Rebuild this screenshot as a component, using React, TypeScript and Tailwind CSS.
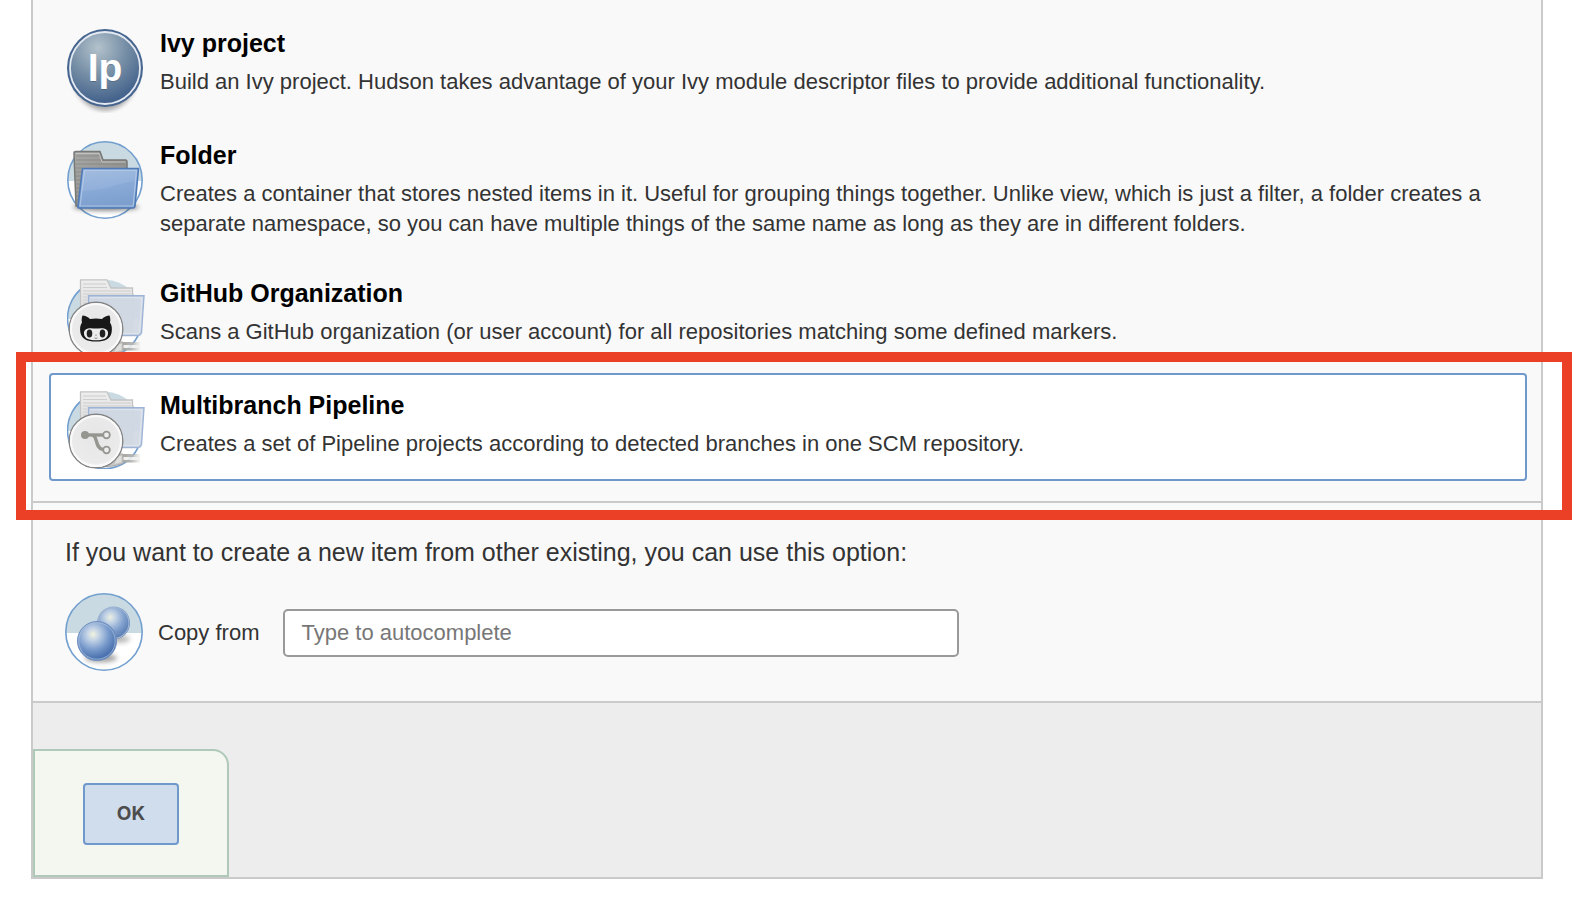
import { useState, type ReactNode } from "react";

function IvyIcon() {
  return (
    <svg viewBox="0 0 78 84" className="h-[84px] w-[78px]" aria-hidden="true">
      <defs>
        <radialGradient id="ivyFill" cx="0.4" cy="0.22" r="0.75">
          <stop offset="0" stopColor="#b3c2cc" />
          <stop offset="0.5" stopColor="#7a92a8" />
          <stop offset="1" stopColor="#45638c" />
        </radialGradient>
        <filter id="ivyShadow" x="-20%" y="-20%" width="140%" height="140%">
          <feGaussianBlur stdDeviation="2" />
        </filter>
      </defs>
      <ellipse cx="38" cy="44" rx="33" ry="38" fill="#000" opacity="0.3" filter="url(#ivyShadow)" />
      <ellipse cx="38" cy="39" rx="38" ry="39" fill="#46658f" />
      <ellipse cx="38" cy="39" rx="35" ry="36" fill="url(#ivyFill)" stroke="#e3e9f1" strokeWidth="1.8" />
      <g fontFamily="'Liberation Sans', Arial, sans-serif" fontWeight="700" fontSize="39" textAnchor="middle">
        <text x="38" y="53" fill="#2d4560" opacity="0.4">Ip</text>
        <text x="38" y="52" fill="#fff">Ip</text>
      </g>
    </svg>
  );
}

function Disc({ id, rx = 37.2, outline = true }: { id: string; rx?: number; outline?: boolean }) {
  return (
    <>
      <clipPath id={id}>
        <ellipse cx="38" cy="39" rx={rx} ry="38.2" />
      </clipPath>
      <g clipPath={`url(#${id})`}>
        <rect x="-1" width="80" height="78" fill="#fff" />
        <rect x="-1" width="80" height="40" fill="#c9dae2" />
      </g>
      {outline && <ellipse cx="38" cy="39" rx={rx} ry="38.2" fill="none" stroke="#729fcf" strokeWidth="1.6" />}
    </>
  );
}

function FolderIcon() {
  return (
    <svg viewBox="0 0 78 84" className="h-[84px] w-[78px]" aria-hidden="true">
      <defs>
        <linearGradient id="fBack" x1="0" y1="0" x2="1" y2="1">
          <stop offset="0" stopColor="#a8a8a6" />
          <stop offset="1" stopColor="#868684" />
        </linearGradient>
        <linearGradient id="fFront" x1="0" y1="0" x2="0.2" y2="1">
          <stop offset="0" stopColor="#9cb7dd" />
          <stop offset="0.5" stopColor="#8aabd8" />
          <stop offset="1" stopColor="#7d9fcd" />
        </linearGradient>
        <filter id="fBlur" x="-20%" y="-60%" width="140%" height="220%">
          <feGaussianBlur stdDeviation="2.2" />
        </filter>
      </defs>
      <Disc id="fDisc" />
      <ellipse cx="39" cy="66" rx="33" ry="4" fill="#222" opacity="0.5" filter="url(#fBlur)" />
      <path d="M9 65 L7 12 Q7 10.500 9 10.500 H33 L36 19 H59 Q60 19 60 21 V65 Z" fill="url(#fBack)" stroke="#777775" strokeWidth="1.500" />
      <path d="M9 15H33M9 19H34M9 23H58M9 27H15M9 31H15M9 35H14M9 39H14M9 43H14M9 47H13M9 51H13M9 55H12M9 59H12" stroke="#777775" strokeWidth="1" opacity="0.5" />
      <path d="M9 12.500H32L35 21H58.500" fill="none" stroke="#d0d0ce" strokeWidth="1" opacity="0.7" />
      <path d="M15.500 27.500H71.500L68 65Q67.500 67 66 67H12Q10.500 67 11 65Z" fill="url(#fFront)" stroke="#4f7ab8" strokeWidth="1.600" strokeLinejoin="round" />
      <path d="M17.500 29.500H69.500L66.200 65H13Z" fill="none" stroke="#bcd0ec" strokeWidth="1.200" opacity="0.7" />
      <path d="M17 30H69L68 40C52 42 42 49 15 50Z" fill="#fff" opacity="0.08" />
    </svg>
  );
}

function OrgBase({ id, children }: { id: string; children: ReactNode }) {
  return (
    <svg viewBox="0 0 78 84" className="h-[84px] w-[78px]" aria-hidden="true">
      <defs>
        <linearGradient id={`${id}Back`} x1="0" y1="0" x2="0" y2="1">
          <stop offset="0" stopColor="#eeeeee" />
          <stop offset="1" stopColor="#d2d4d6" />
        </linearGradient>
        <linearGradient id={`${id}Front`} x1="0" y1="0" x2="1" y2="1">
          <stop offset="0" stopColor="#cbd5e2" />
          <stop offset="1" stopColor="#d3dae4" />
        </linearGradient>
        <radialGradient id={`${id}Badge`} cx="0.5" cy="0.4" r="0.6">
          <stop offset="0" stopColor="#e6e6e6" />
          <stop offset="0.85" stopColor="#ebebeb" />
          <stop offset="1" stopColor="#ffffff" />
        </radialGradient>
        <linearGradient id={`${id}Pipe`} gradientUnits="userSpaceOnUse" x1="54" y1="0" x2="74" y2="0">
          <stop offset="0" stopColor="#a2a2a0" />
          <stop offset="0.5" stopColor="#b5b5b3" />
          <stop offset="1" stopColor="#b5b5b3" stopOpacity="0" />
        </linearGradient>
        <clipPath id={`${id}Clip`}>
          <rect width="78" height="78" />
        </clipPath>
      </defs>
      <g clipPath={`url(#${id}Clip)`}>
        <Disc id={`${id}Disc`} outline={false} />
        <path d="M16 8.500A37.200 38.200 0 1 0 73.500 50" fill="none" stroke="#729fcf" strokeWidth="1.600" />
        <path d="M13.500 55V.8H40L44 9H65.500V55Z" fill={`url(#${id}Back)`} stroke="#c3c3c3" strokeWidth="1.300" />
        <path d="M16 5H39M16 8.500H40M16 12H64M16 15H64M16 18H20M16 21H20M16 24H20" stroke="#cdcdcd" strokeWidth="1" />
        <path d="M21.500 16.700H77L74.500 53.500Q74 56 71.500 56.500H21.500Z" fill={`url(#${id}Front)`} fillOpacity="0.94" stroke="#9eb4d6" strokeWidth="1.400" />
        <path d="M23.500 18.700H75L72.500 53Q72 54.500 70 54.500H23.500" fill="none" stroke="#e0e6ee" strokeWidth="1" />
        <rect x="52" y="66" width="21" height="3" fill="#eeeeed" opacity="0.85" />
        <rect x="52" y="63" width="22" height="3" fill={`url(#${id}Pipe)`} />
        <rect x="52" y="69" width="22" height="2.500" fill={`url(#${id}Pipe)`} />
        <path d="M34 76L50 63H56V72.500L46 75Z" fill="#c6c6c5" stroke="#a8a8a6" strokeWidth="1" />
        <path d="M50 65H54.500V71L48 73Z" fill="#dededd" />
        <circle cx="29" cy="50" r="26.800" fill={`url(#${id}Badge)`} stroke="#858585" strokeWidth="1.400" />
        <circle cx="29" cy="50" r="25" fill="none" stroke="#fafafa" strokeWidth="2" />
        {children}
      </g>
    </svg>
  );
}

function GitHubOrgIcon() {
  return (
    <OrgBase id="gh">
      <path
        d="M15.500 36.500C18 36.500 21 38 23 40C27 39.200 31 39.200 35 40C37 38 40 36.500 42.500 36.500C43.500 39 43.500 41.500 43 43.500C45 46 45.300 50 44.500 54C43.200 60 38 62.500 29 62.500S14.800 60 13.500 54C12.700 50 13 46 15 43.500C14.500 41.500 14.500 39 15.500 36.500Z"
        fill="#181818"
      />
      <path
        d="M21 49.500C24 48.800 26 49.500 29 49.500S34 48.800 37 49.500C40 50.200 41.500 52 41 55C40.300 60 35.500 61.200 29 61.200S17.700 60 17 55C16.500 52 18 50.200 21 49.500Z"
        fill="#ececec"
      />
      <ellipse cx="22.500" cy="54.500" rx="2.800" ry="3.900" fill="#222" />
      <ellipse cx="35.500" cy="54.500" rx="2.800" ry="3.900" fill="#222" />
      <path d="M29 55.500V57M27.500 59Q29 59.700 30.500 59" fill="none" stroke="#888" strokeWidth="1" />
    </OrgBase>
  );
}

function MultibranchIcon() {
  return (
    <OrgBase id="mb">
      <g fill="none" stroke="#969691" strokeWidth="3.400">
        <path d="M18 44H36" />
        <path d="M26 44C31 47 28 57 36 58.500" />
        <circle cx="39.500" cy="44" r="3.300" fill="#eee" strokeWidth="1.800" />
        <circle cx="39.500" cy="59" r="3.300" fill="#eee" strokeWidth="1.800" />
      </g>
      <circle cx="18" cy="44" r="4" fill="#969691" />
    </OrgBase>
  );
}

function CopyIcon() {
  return (
    <svg viewBox="-1 0 80 84" className="h-[84px] w-[80px]" aria-hidden="true">
      <defs>
        <radialGradient id="ball" cx="0.4" cy="0.33" r="0.62">
          <stop offset="0" stopColor="#f3f3df" />
          <stop offset="0.25" stopColor="#c3d3e6" />
          <stop offset="0.65" stopColor="#7799cb" />
          <stop offset="1" stopColor="#4a71ae" />
        </radialGradient>
        <filter id="bBlur" x="-30%" y="-60%" width="160%" height="220%">
          <feGaussianBlur stdDeviation="2.500" />
        </filter>
      </defs>
      <Disc id="cDisc" rx={38.2} />
      <ellipse cx="52" cy="46" rx="12" ry="3.500" fill="#222" opacity="0.35" filter="url(#bBlur)" />
      <circle cx="47.500" cy="30" r="16.500" fill="url(#ball)" opacity="0.85" />
      <circle cx="47.500" cy="30" r="15.500" fill="none" stroke="#9fb4d2" strokeWidth="1.200" />
      <ellipse cx="35" cy="65" rx="16" ry="4" fill="#222" opacity="0.45" filter="url(#bBlur)" />
      <circle cx="31" cy="48" r="19.500" fill="url(#ball)" stroke="#6f90c0" strokeWidth="1" />
      <circle cx="31" cy="48" r="18.200" fill="none" stroke="#a9bfdf" strokeWidth="1" opacity="0.8" />
    </svg>
  );
}

const items: { id: string; title: string; text: string; icon: ReactNode; marked?: boolean }[] = [
  {
    id: "ivy",
    title: "Ivy project",
    text: "Build an Ivy project. Hudson takes advantage of your Ivy module descriptor files to provide additional functionality.",
    icon: <IvyIcon />,
  },
  {
    id: "folder",
    title: "Folder",
    text: "Creates a container that stores nested items in it. Useful for grouping things together. Unlike view, which is just a filter, a folder creates a separate namespace, so you can have multiple things of the same name as long as they are in different folders.",
    icon: <FolderIcon />,
  },
  {
    id: "github",
    title: "GitHub Organization",
    text: "Scans a GitHub organization (or user account) for all repositories matching some defined markers.",
    icon: <GitHubOrgIcon />,
  },
  {
    id: "multibranch",
    title: "Multibranch Pipeline",
    text: "Creates a set of Pipeline projects according to detected branches in one SCM repository.",
    icon: <MultibranchIcon />,
    marked: true,
  },
];

export default function App() {
  const [selected, setSelected] = useState("multibranch");
  return (
    <main className="bg-white pr-[50px] pb-6 pl-[31px] font-['Liberation_Sans',Arial,sans-serif] text-[22px] leading-[30px] text-[#333]">
      <form className="border-2 border-t-0 border-[#cacaca] bg-[#f9f9f9]" onSubmit={(e) => e.preventDefault()}>
        <ul className="flex flex-col gap-1 border-b-2 border-[#cacaca] pt-[11px] pr-3.5 pb-5 pl-4">
          {items.map((item) => (
            <li key={item.id} className="relative">
              <label
                className={
                  "flex min-h-[108px] items-start gap-[15px] rounded border-2 p-4 " +
                  (selected === item.id ? "border-[#6f98cb] bg-white" : "border-transparent")
                }
              >
                <input
                  type="radio"
                  name="mode"
                  className="sr-only"
                  checked={selected === item.id}
                  onChange={() => setSelected(item.id)}
                />
                <span className="-mb-3 shrink-0">{item.icon}</span>
                <span className="flex flex-col gap-2.5">
                  <span className="text-[25px] leading-7 font-bold text-black">{item.title}</span>
                  <span>{item.text}</span>
                </span>
              </label>
              {item.marked && (
                <span className="pointer-events-none absolute -top-[21px] -right-[45px] -bottom-[39px] -left-[33px] border-10 border-[#ec4026]" />
              )}
            </li>
          ))}
        </ul>
        <section className="border-b-2 border-[#cacaca] px-8 pt-[35px] pb-6">
          <p className="text-[25px] leading-7">If you want to create a new item from other existing, you can use this option:</p>
          <div className="mt-[27px] flex items-start">
            <CopyIcon />
            <div className="flex h-20 items-center">
              <label htmlFor="from" className="ml-[13px]">
                Copy from
              </label>
              <input
                id="from"
                type="text"
                placeholder="Type to autocomplete"
                className="ml-6 h-12 w-[676px] rounded-[5px] border-2 border-[#999] bg-white px-4 placeholder:text-[#777]"
              />
            </div>
          </div>
        </section>
        <footer className="flex bg-[#ededed] pt-[46px]">
          <div className="rounded-tr-2xl border-2 border-[#aec9b8] bg-[#f4f6f0] px-12 pt-8 pb-[30px]">
            <button
              type="submit"
              className="h-[62px] w-24 rounded border-2 border-[#6f98cb] bg-[#d0ddec] font-[Inter,sans-serif] text-[19px] font-bold text-[#4d4d4d]"
            >
              OK
            </button>
          </div>
        </footer>
      </form>
    </main>
  );
}
